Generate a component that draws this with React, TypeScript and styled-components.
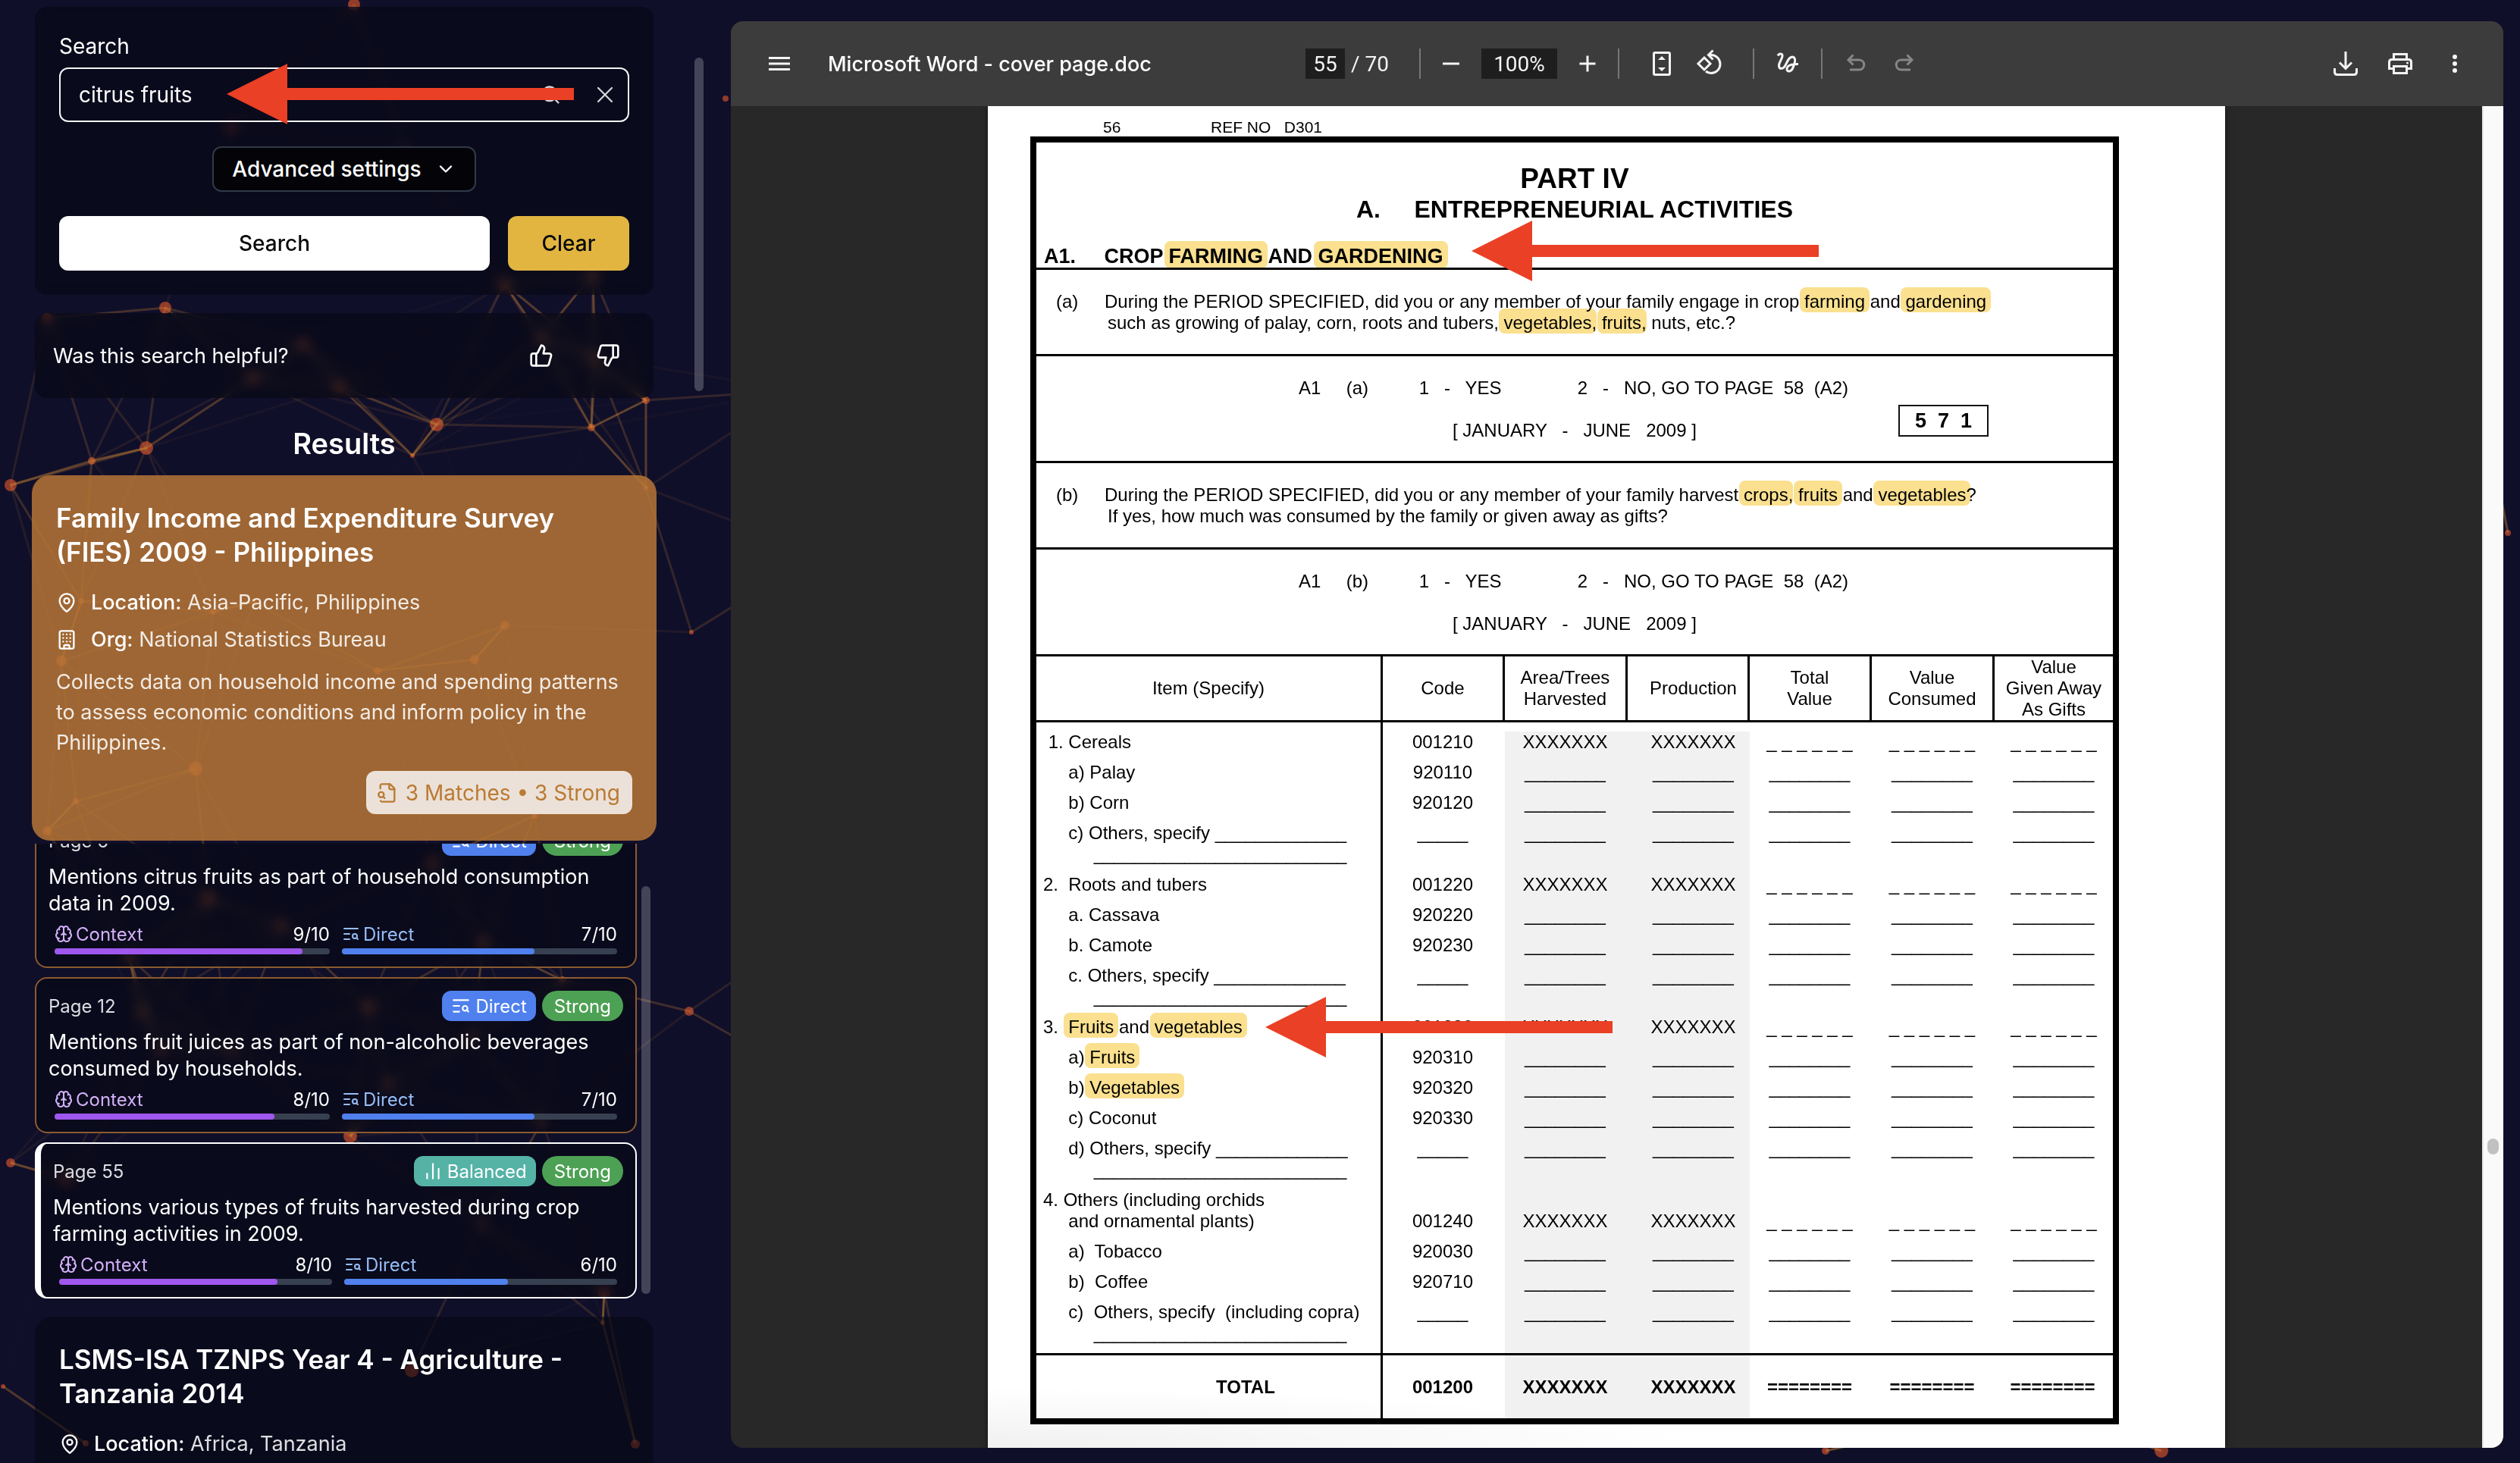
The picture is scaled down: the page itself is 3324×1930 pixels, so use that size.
import React from "react";
import styled, { createGlobalStyle, css } from "styled-components";
import {
  Brain,
  Building,
  ChartNoAxesColumn,
  ChevronDown,
  MapPin,
  Search as SearchIcon,
  TextSearch,
  ThumbsDown,
  ThumbsUp,
  X,
} from "lucide-react";

const ui = `Inter, "Open Sans", sans-serif`;
const doc = `"Liberation Sans", Arial, sans-serif`;

const GlobalStyle = createGlobalStyle`
  * { box-sizing: border-box; }
  html, body { margin: 0; background: #100f2a; }
  body { font-family: ${ui}; color: #fff; overflow: hidden; }
  button, input { font: inherit; color: inherit; margin: 0; border: 0; padding: 0; background: none; }
  button { cursor: pointer; }
  h1, h2, h3, p { margin: 0; font-weight: inherit; }
`;

/* ---------- particle network ---------- */

type Particle = [x: number, y: number, r: number];

const particles: Particle[] = [
  [467, 6, 8], [218, 406, 8], [305, 168, 7], [665, 374, 8], [782, 362, 8],
  [400, 454, 8], [333, 499, 8], [448, 510, 8], [576, 560, 9], [193, 591, 9],
  [121, 608, 5], [544, 601, 3], [780, 564, 5], [852, 528, 5], [957, 130, 4],
  [14, 640, 8], [62, 420, 7], [714, 445, 6], [785, 472, 6], [535, 195, 4],
  [852, 644, 3], [912, 834, 3], [666, 825, 6], [626, 870, 6], [498, 885, 5],
  [281, 807, 4], [335, 794, 4], [107, 793, 4], [81, 872, 7], [258, 1014, 9],
  [100, 1057, 4], [62, 1096, 6], [705, 1076, 4], [570, 1137, 7], [275, 1185, 9],
  [372, 1221, 7], [638, 1243, 7], [170, 1262, 6], [186, 1335, 6], [742, 1293, 5],
  [485, 1328, 8], [909, 1334, 6], [212, 1386, 6], [305, 1388, 5], [622, 1370, 5],
  [512, 1430, 6], [715, 1480, 5], [462, 1499, 9], [14, 1534, 6], [88, 1555, 8],
  [635, 1616, 5], [797, 1705, 8], [795, 1745, 3], [543, 1808, 9], [838, 1905, 6],
  [4, 1829, 3], [113, 1904, 4], [1050, 515, 5], [1080, 730, 5], [1090, 1210, 5],
  [1060, 1420, 5], [3308, 703, 4], [3290, 610, 4], [2408, 1914, 5], [2470, 1900, 5],
  [2851, 1914, 9], [2780, 1890, 5],
];

const LINK_DISTANCE = 290;

const links = particles.flatMap(([x1, y1], i) =>
  particles.slice(i + 1).flatMap(([x2, y2]) => {
    const d = Math.hypot(x1 - x2, y1 - y2);
    return d < LINK_DISTANCE ? [{ x1, y1, x2, y2, o: 0.6 * (1 - d / LINK_DISTANCE) }] : [];
  })
);

const NetworkCanvas = styled.svg`
  position: fixed;
  inset: 0;
  width: 100%;
  height: 100%;
`;

function Network() {
  return (
    <NetworkCanvas aria-hidden="true">
      {particles.map(([x, y, r], i) => (
        <circle key={i} cx={x} cy={y} r={r} fill="#d9532c" opacity={0.65} />
      ))}
      {links.map((l, i) => (
        <line key={i} x1={l.x1} y1={l.y1} x2={l.x2} y2={l.y2} stroke="#d28a35" strokeWidth={3} opacity={l.o} />
      ))}
    </NetworkCanvas>
  );
}

/* ---------- red pointer ---------- */

const ArrowSvg = styled.svg<{ $x: number; $y: number }>`
  position: absolute;
  left: ${(p) => p.$x}px;
  top: ${(p) => p.$y}px;
  width: 458px;
  height: 80px;
  pointer-events: none;
`;

function Arrow({ x, y }: { x: number; y: number }) {
  return (
    <ArrowSvg $x={x} $y={y} viewBox="0 0 458 80" aria-hidden="true">
      <path d="M0 40 80 0v32h378v16H80v32z" fill="#ea4025" />
    </ArrowSvg>
  );
}

/* ---------- shell ---------- */

const Shell = styled.div`
  position: relative;
  display: grid;
  grid-template-columns: 29% 1fr;
  height: 100vh;
  overflow: hidden;
`;

const Sidebar = styled.aside`
  display: flex;
  gap: 54px;
  min-width: 0;
  height: 100vh;
  padding: 9px 36px 0 46px;
`;

const SidebarContent = styled.div`
  flex: 1;
  min-width: 0;
`;

const ScrollThumb = styled.div<{ $h: number; $mt: number }>`
  flex: none;
  width: 12px;
  height: ${(p) => p.$h}px;
  margin-top: ${(p) => p.$mt}px;
  border-radius: 6px;
  background: rgba(255, 255, 255, 0.22);
`;

const glass = css`
  background: rgba(5, 6, 18, 0.6);
  backdrop-filter: blur(8px);
`;

/* ---------- search form ---------- */

const SearchCard = styled.form`
  ${glass}
  display: flex;
  flex-direction: column;
  gap: 32px;
  padding: 32px;
  border-radius: 16px;
`;

const Field = styled.div`
  position: relative;
  display: flex;
  flex-direction: column;
  gap: 8px;
`;

const FieldLabel = styled.label`
  font-size: 28px;
  line-height: 40px;
`;

const InputFrame = styled.div`
  display: flex;
  align-items: center;
  gap: 40px;
  height: 72px;
  padding: 0 12px 0 24px;
  border: 2px solid #f4f4f6;
  border-radius: 12px;

  input {
    flex: 1;
    min-width: 0;
    height: 100%;
    font-size: 28px;
    outline: none;
  }
  svg, button { display: block; color: #d4d4da; }
`;

const AdvancedButton = styled.button`
  display: flex;
  align-items: center;
  align-self: center;
  gap: 18px;
  height: 60px;
  padding: 0 24px;
  border: 2px solid #303a4a;
  border-radius: 12px;
  background: #040408;
  font-size: 28px;
  font-weight: 500;
`;

const Actions = styled.div`
  display: flex;
  gap: 24px;
`;

const ActionButton = styled.button<{ $kind: "primary" | "accent" }>`
  flex: ${(p) => (p.$kind === "primary" ? "1" : "0 0 160px")};
  height: 72px;
  border-radius: 12px;
  background: ${(p) => (p.$kind === "primary" ? "#fff" : "#e1b540")};
  color: #0a0a0a;
  font-size: 28px;
  font-weight: 500;
`;

/* ---------- feedback ---------- */

const Feedback = styled.section`
  ${glass}
  display: flex;
  align-items: center;
  gap: 56px;
  height: 112px;
  margin-top: 24px;
  padding: 0 44px 0 24px;
  border-radius: 16px;
  font-size: 27px;

  p { flex: 1; }
  button, svg { display: block; }
`;

const ResultsHeading = styled.h2`
  margin: 36px 0 18px;
  text-align: center;
  font-size: 38px;
  line-height: 48px;
  font-weight: 600;
`;

/* ---------- result cards ---------- */

const ResultCard = styled.article<{ $selected?: boolean }>`
  border-radius: 24px;
  padding: 34px 32px 35px;
  ${(p) =>
    p.$selected
      ? css`
          margin: 0 -4px;
          background: rgba(183, 118, 54, 0.85);
        `
      : css`
          margin-top: 24px;
          background: rgba(5, 6, 18, 0.6);
        `}
`;

const ResultTitle = styled.h3`
  margin-bottom: 24px;
  font-size: 35px;
  line-height: 45px;
  font-weight: 600;
`;

const Meta = styled.p`
  display: flex;
  align-items: center;
  gap: 18px;
  margin-bottom: 9px;
  font-size: 27px;
  line-height: 40px;
  color: rgba(255, 255, 255, 0.87);

  b { font-weight: 500; color: #fff; }
  svg { color: #fff; }
`;

const Summary = styled.p`
  margin-top: 16px;
  font-size: 27px;
  line-height: 40px;
  color: rgba(255, 255, 255, 0.87);
`;

const MatchCount = styled.button`
  display: flex;
  align-items: center;
  gap: 10px;
  height: 57px;
  margin: 17px 0 0 auto;
  padding: 0 16px 0 14px;
  border-radius: 12px;
  background: #ebe1d8;
  color: #bb7a33;
  font-size: 28px;
`;

const FileSearchGlyph = () => (
  <svg width="28" height="28" viewBox="0 0 24 24" fill="none" stroke="currentColor" strokeWidth="2" strokeLinecap="round" strokeLinejoin="round" aria-hidden="true">
    <path d="M14 2v4a2 2 0 0 0 2 2h4" />
    <path d="M4.268 21a2 2 0 0 0 1.727 1H18a2 2 0 0 0 2-2V7l-5-5H6a2 2 0 0 0-2 2v3" />
    <path d="m9 18-1.500-1.500" />
    <circle cx="5" cy="14" r="3" />
  </svg>
);

/* ---------- matches ---------- */

const MatchViewport = styled.div`
  display: flex;
  gap: 6px;
  height: 600px;
  margin-top: 4px;
  padding-right: 4px;
`;

const MatchStack = styled.div`
  flex: 1;
  display: flex;
  flex-direction: column;
  justify-content: flex-end;
  gap: 12px;
  overflow: hidden;
`;

const MatchCard = styled.article<{ $active?: boolean }>`
  ${glass}
  flex: none;
  padding: 16px;
  border: 2px solid ${(p) => (p.$active ? "#fff" : "#8b5b2f")};
  border-left-width: ${(p) => (p.$active ? 8 : 2)}px;
  border-radius: 16px;
  font-size: 24px;
`;

const MatchHead = styled.header`
  display: flex;
  align-items: center;
  gap: 8px;
  height: 40px;
  color: #dcdce2;

  span:first-child { flex: 1; }
`;

const Tag = styled.span<{ $tone: "direct" | "balanced" | "strong" }>`
  display: flex;
  align-items: center;
  gap: 6px;
  height: 40px;
  padding: 0 ${(p) => (p.$tone === "strong" ? 16 : 12)}px;
  border-radius: ${(p) => (p.$tone === "strong" ? 20 : 12)}px;
  background: ${(p) => ({ direct: "#4f80ee", balanced: "#55b3a6", strong: "#4da154" })[p.$tone]};
  color: #fff;
`;

const MatchText = styled.p`
  margin-top: 10px;
  font-size: 27px;
  line-height: 35px;
`;

const Scores = styled.div`
  display: grid;
  grid-template-columns: 1fr 1fr;
  gap: 16px;
  margin-top: 7px;
  padding: 0 8px;
`;

const ScoreHead = styled.div<{ $color: string }>`
  display: flex;
  align-items: center;
  gap: 4px;
  height: 32px;
  color: ${(p) => p.$color};

  span { flex: 1; }
  b { font-weight: 400; color: #fff; }
`;

const Track = styled.div<{ $color: string }>`
  height: 8px;
  margin-top: 3px;
  border-radius: 4px;
  background: #374050;

  div {
    height: 100%;
    border-radius: 4px;
    background: ${(p) => p.$color};
  }
`;

type Match = {
  page: number;
  kind: "direct" | "balanced";
  text: string;
  context: number;
  direct: number;
  active?: boolean;
};

const matches: Match[] = [
  { page: 6, kind: "direct", text: "Mentions citrus fruits as part of household consumption data in 2009.", context: 9, direct: 7 },
  { page: 12, kind: "direct", text: "Mentions fruit juices as part of non-alcoholic beverages consumed by households.", context: 8, direct: 7 },
  { page: 55, kind: "balanced", text: "Mentions various types of fruits harvested during crop farming activities in 2009.", context: 8, direct: 6, active: true },
];

function Score(props: { icon: React.ReactNode; label: string; value: number; color: string; bar: string }) {
  return (
    <div>
      <ScoreHead $color={props.color}>
        {props.icon}
        <span>{props.label}</span>
        <b>{props.value}/10</b>
      </ScoreHead>
      <Track $color={props.bar}>
        <div style={{ width: `${props.value * 10}%` }} />
      </Track>
    </div>
  );
}

function MatchItem({ m }: { m: Match }) {
  return (
    <MatchCard $active={m.active}>
      <MatchHead>
        <span>Page {m.page}</span>
        <Tag $tone={m.kind}>
          {m.kind === "direct" ? <TextSearch size={26} /> : <ChartNoAxesColumn size={26} />}
          {m.kind === "direct" ? "Direct" : "Balanced"}
        </Tag>
        <Tag $tone="strong">Strong</Tag>
      </MatchHead>
      <MatchText>{m.text}</MatchText>
      <Scores>
        <Score icon={<Brain size={24} />} label="Context" value={m.context} color="#d3b0f8" bar="#9f57ee" />
        <Score icon={<TextSearch size={24} />} label="Direct" value={m.direct} color="#95bdf6" bar="#4f80ee" />
      </Scores>
    </MatchCard>
  );
}

/* ---------- viewer ---------- */

const ViewerArea = styled.main`
  min-width: 0;
  padding: 28px 22px 20px 0;
`;

const Viewer = styled.section`
  position: relative;
  display: flex;
  flex-direction: column;
  height: 100%;
  border-radius: 16px;
  overflow: hidden;
  background: #282828;
`;

const Toolbar = styled.header`
  display: flex;
  flex: none;
  align-items: center;
  height: 112px;
  background: #3c3c3c;
  font-family: Roboto, ${ui};
  font-size: 28px;
  color: #f4f4f4;
`;

const ToolbarSide = styled.div<{ $end?: boolean }>`
  flex: 1 1 0;
  display: flex;
  align-items: center;
  justify-content: ${(p) => (p.$end ? "flex-end" : "flex-start")};
  padding: 0 28px 0 32px;
  white-space: nowrap;

  h1 {
    margin-left: 32px;
    font-family: ${ui};
    font-size: 27px;
    font-weight: 500;
    color: #fff;
  }
`;

const ToolbarCenter = styled.div`
  display: flex;
  align-items: center;
`;

const ToolInput = styled.input<{ $w: number }>`
  width: ${(p) => p.$w}px;
  height: 40px;
  background: #1e1e1e;
  text-align: center;
`;

const PageTotal = styled.span`
  width: 98px;
  padding-left: 8px;
`;

const Rule = styled.i`
  width: 2px;
  height: 40px;
  background: #777;
`;

const Tools = styled.div<{ $before: number; $after: number }>`
  display: flex;
  padding: 0 ${(p) => p.$after}px 0 ${(p) => p.$before}px;
`;

const Tool = styled.button<{ $w?: number }>`
  display: flex;
  align-items: center;
  justify-content: center;
  width: ${(p) => p.$w ?? 64}px;
  height: 64px;

  &:disabled { color: #868686; }
`;

const Glyph = ({ children, fill }: { children: React.ReactNode; fill?: boolean }) => (
  <svg width="40" height="40" viewBox="0 0 40 40" fill={fill ? "currentColor" : "none"} stroke={fill ? "none" : "currentColor"} strokeWidth="3" aria-hidden="true">
    {children}
  </svg>
);

const Stage = styled.div`
  flex: 1;
  min-height: 0;
  display: flex;
  overflow: hidden;
`;

const PageColumn = styled.div`
  flex: 1;
  display: flex;
  justify-content: center;
`;

const DocScrollbar = styled.div`
  flex: none;
  width: 28px;
  padding: 1362px 6px 0 5px;
  border-left: 2px solid #e8e8e8;
  background: #fafafa;

  div {
    height: 21px;
    border-radius: 8px;
    background: #c1c1c1;
  }
`;

const Sheet = styled.article`
  position: relative;
  flex: none;
  width: 1632px;
  padding: 16px 140px 0 56px;
  background: radial-gradient(ellipse 950px 80px at 0 100%, rgba(0, 0, 0, 0.06), transparent) #fff;
  box-shadow: 0 0 8px rgba(0, 0, 0, 0.5);
  color: #000;
  font-family: ${doc};
  font-size: 24px;
  line-height: 28px;
  white-space: pre;
`;

const RunningHead = styled.div`
  display: flex;
  padding-left: 96px;
  font-size: 21px;
  line-height: 24px;

  span { width: 142px; }
`;

const FormBox = styled.div`
  border: 8px solid #000;
`;

const FormRow = styled.section`
  border-bottom: 3px solid #000;
`;

const Heading = styled(FormRow)`
  padding: 28px 0 0 10px;
  font-weight: 700;
  text-align: center;

  h1 { font-size: 37px; line-height: 40px; padding-right: 10px; }
  h2 { font-size: 32px; line-height: 40px; padding-right: 10px; }
  h3 { margin-top: 28px; font-size: 27px; line-height: 29px; text-align: left; }
`;

const Question = styled(FormRow)`
  display: flex;
  height: 114px;
  padding: 28px 0 0 26px;

  > span { width: 64px; }
  p + p { padding-left: 4px; }
`;

const Answer = styled(FormRow)`
  display: flex;
  height: 141px;
  padding: 28px 0 0 346px;
`;

const AnswerLines = styled.div`
  display: grid;
  align-content: start;
  gap: 28px;
  width: 791px;

  p + p { padding-left: 203px; }
`;

const CodeBox = styled.div`
  height: 42px;
  margin-top: 36px;
  padding: 0 20px;
  border: 2px solid #111;
  font-size: 27px;
  line-height: 38px;
  font-weight: 700;
`;

const Hit = styled.mark<{ $flush?: boolean }>`
  margin: 0 ${(p) => (p.$flush ? 0 : -6)}px 0 -6px;
  padding: 5px ${(p) => (p.$flush ? 0 : 6)}px 1px 6px;
  border-radius: 8px;
  background: #fae08f;
  color: inherit;
  mix-blend-mode: multiply;
`;

const FormTable = styled.table`
  width: 100%;
  table-layout: fixed;
  border-spacing: 0;

  th, td { padding: 0; font-weight: inherit; text-align: center; vertical-align: top; }
  th:nth-child(4), td:nth-child(4) { padding-left: 15px; }

  thead th {
    height: 87px;
    vertical-align: middle;
    border-right: 3px solid #000;
    border-bottom: 3px solid #000;
  }
  thead th:last-child { border-right: 0; }

  tbody th { padding: 0 0 12px 9px; text-align: left; }
  tbody th, tfoot th { border-right: 3px solid #000; }
  td { border-right: 3px solid transparent; }
  td:last-child { border-right: 0; }
  tbody td { padding-bottom: 12px; }
  tr[data-shaded] td:nth-child(3), tr[data-shaded] td:nth-child(4) { background: #f1f1f1; }

  tfoot { font-weight: 700; }
  tfoot th, tfoot td { height: 86px; border-top: 3px solid #000; vertical-align: middle; background-clip: padding-box; }
  tfoot td { border-right-width: 0; padding-right: 3px; }
  tfoot th { padding-left: 98px; }
`;

const Spacer = styled.tr`
  height: 12px;

  th, td { padding: 0; }
`;

const Row = styled.tr<{ $low?: boolean }>`
  td { vertical-align: ${(p) => (p.$low ? "bottom" : "top")} !important; }
`;

const SOLID = "________";
const DASHED = "_ _ _ _ _ _";
const XS = "XXXXXXX";
const in5 = "     ";
const long = "\n" + " ".repeat(10) + "_".repeat(25);

type Item = { label: React.ReactNode; code: string; group?: boolean; low?: boolean };

const items: Item[] = [
  { label: " 1. Cereals", code: "001210", group: true },
  { label: in5 + "a) Palay", code: "920110" },
  { label: in5 + "b) Corn", code: "920120" },
  { label: in5 + "c) Others, specify _____________" + long, code: "_____" },
  { label: "2.  Roots and tubers", code: "001220", group: true },
  { label: in5 + "a. Cassava", code: "920220" },
  { label: in5 + "b. Camote", code: "920230" },
  { label: in5 + "c. Others, specify _____________" + long, code: "_____" },
  { label: <>3.  <Hit>Fruits</Hit> and <Hit>vegetables</Hit></>, code: "001230", group: true },
  { label: <>{in5}a) <Hit>Fruits</Hit></>, code: "920310" },
  { label: <>{in5}b) <Hit>Vegetables</Hit></>, code: "920320" },
  { label: in5 + "c) Coconut", code: "920330" },
  { label: in5 + "d) Others, specify _____________" + long, code: "_____" },
  { label: "4. Others (including orchids\n" + in5 + "and ornamental plants)", code: "001240", group: true, low: true },
  { label: in5 + "a)  Tobacco", code: "920030" },
  { label: in5 + "b)  Coffee", code: "920710" },
  { label: in5 + "c)  Others, specify  (including copra)" + long, code: "_____" },
];

const heads = ["Item (Specify)", "Code", "Area/Trees\nHarvested", "Production", "Total\nValue", "Value\nConsumed", "Value\nGiven Away\nAs Gifts"];
const widths = [457, 161, 162, 161, 161, 162];

const choices = (part: string) =>
  `A1     (${part})          1   -   YES               2   -   NO, GO TO PAGE  58  (A2)`;
const period = "[ JANUARY   -   JUNE   2009 ]";

function DocumentPage() {
  return (
    <Sheet>
      <RunningHead>
        <span>56</span>REF NO   D301
      </RunningHead>
      <FormBox>
        <Heading>
          <h1>PART IV</h1>
          <h2>A.     ENTREPRENEURIAL ACTIVITIES</h2>
          <h3>A1.     CROP <Hit>FARMING</Hit> AND <Hit>GARDENING</Hit></h3>
        </Heading>
        <Question>
          <span>(a)</span>
          <div>
            <p>During the PERIOD SPECIFIED, did you or any member of your family engage in crop <Hit>farming</Hit> and <Hit>gardening</Hit></p>
            <p>such as growing of palay, corn, roots and tubers, <Hit $flush>vegetables,</Hit> <Hit $flush>fruits,</Hit> nuts, etc.?</p>
          </div>
        </Question>
        <Answer>
          <AnswerLines>
            <p>{choices("a")}</p>
            <p>{period}</p>
          </AnswerLines>
          <CodeBox>5  7  1</CodeBox>
        </Answer>
        <Question>
          <span>(b)</span>
          <div>
            <p>During the PERIOD SPECIFIED, did you or any member of your family harvest <Hit $flush>crops,</Hit> <Hit>fruits</Hit> and <Hit>vegetables</Hit>?</p>
            <p>If yes, how much was consumed by the family or given away as gifts?</p>
          </div>
        </Question>
        <Answer>
          <AnswerLines>
            <p>{choices("b")}</p>
            <p>{period}</p>
          </AnswerLines>
        </Answer>
        <FormTable>
          <colgroup>
            {widths.map((w, i) => (
              <col key={i} width={w} />
            ))}
            <col />
          </colgroup>
          <thead>
            <tr>{heads.map((h) => <th key={h} scope="col">{h}</th>)}</tr>
          </thead>
          <tbody>
            <Spacer><th /><td colSpan={6} /></Spacer>
            {items.map((it, i) => (
              <Row key={i} $low={it.low} data-shaded>
                <th scope="row">{it.label}</th>
                <td>{it.code}</td>
                <td>{it.group ? XS : SOLID}</td>
                <td>{it.group ? XS : SOLID}</td>
                <td>{it.group ? DASHED : SOLID}</td>
                <td>{it.group ? DASHED : SOLID}</td>
                <td>{it.group ? DASHED : SOLID}</td>
              </Row>
            ))}
          </tbody>
          <tfoot>
            <tr data-shaded>
              <th scope="row">TOTAL</th>
              <td>001200</td>
              <td>{XS}</td>
              <td>{XS}</td>
              <td>========</td>
              <td>========</td>
              <td>========</td>
            </tr>
          </tfoot>
        </FormTable>
      </FormBox>
      <Arrow x={638} y={151} />
      <Arrow x={366} y={1175} />
    </Sheet>
  );
}

function ViewerToolbar() {
  return (
    <Toolbar>
      <ToolbarSide>
        <Tool aria-label="Menu">
          <Glyph><path d="M6 12.500h28M6 20h28M6 27.500h28" /></Glyph>
        </Tool>
        <h1>Microsoft Word - cover page.doc</h1>
      </ToolbarSide>
      <ToolbarCenter>
        <ToolInput $w={52} defaultValue="55" aria-label="Page number" />
        <PageTotal>/ 70</PageTotal>
        <Rule />
        <Tool $w={80} aria-label="Zoom out">
          <Glyph><path d="M9 20h22" /></Glyph>
        </Tool>
        <ToolInput $w={100} defaultValue="100%" aria-label="Zoom level" />
        <Tool $w={80} aria-label="Zoom in">
          <Glyph><path d="M9.500 20h21M20 9.500v21" /></Glyph>
        </Tool>
        <Rule />
        <Tools $before={24} $after={24}>
          <Tool aria-label="Fit to page">
            <Glyph>
              <rect x="9.500" y="5.500" width="21" height="29" rx="1.500" />
              <path d="m15 15 5-5 5 5zM15 25l5 5 5-5z" fill="currentColor" stroke="none" />
            </Glyph>
          </Tool>
          <Tool aria-label="Rotate counterclockwise">
            <Glyph>
              <path d="m12 12 8 8-8 8-8-8z" />
              <path d="M18 8.500h3a12 12 0 0 1 0 24c-3 0-5-.8-7-2.500" />
              <path d="m23.500 2.500-6 6 6 6" />
            </Glyph>
          </Tool>
        </Tools>
        <Rule />
        <Tool $w={88} aria-label="Draw">
          <Glyph>
            <path d="M7 9.500c2-3.500 6.500-3.500 6 .5-.5 5-5 8.500-4.500 13 .5 5 5.500 4 8 0 3-5 4-10 8-11.500 4-1.500 6 2 5 6-1.500 6-3 12-7.500 12.500-3.500.3-4-4-1.500-6.500s6-3 13.500-3" />
          </Glyph>
        </Tool>
        <Rule />
        <Tools $before={12} $after={0}>
          <Tool disabled aria-label="Undo">
            <Glyph><path d="M16.500 8.500 10 15l6.500 6.500M10 15h14c9 0 9 13 0 13H12" /></Glyph>
          </Tool>
          <Tool disabled aria-label="Redo">
            <Glyph><path d="m23.500 8.500 6.500 6.500-6.500 6.500M30 15H16c-9 0-9 13 0 13h12" /></Glyph>
          </Tool>
        </Tools>
      </ToolbarCenter>
      <ToolbarSide $end>
        <Tool $w={72} aria-label="Download">
          <Glyph><path d="M20 4v22M12 18.500l8 8 8-8M5.500 26v5q0 3.500 3.500 3.500h22q3.500 0 3.500-3.500v-5" /></Glyph>
        </Tool>
        <Tool $w={72} aria-label="Print">
          <Glyph>
            <path d="M11.500 26.500h-6V18q0-3.500 3.500-3.500h22q3.500 0 3.500 3.500v8.500h-6M11.500 14V7.500h17V14M11.500 23.500h17v9h-17z" />
            <circle cx="29.500" cy="19" r="1.500" fill="currentColor" stroke="none" />
          </Glyph>
        </Tool>
        <Tool $w={72} aria-label="More options">
          <Glyph fill>
            <circle cx="20" cy="11" r="3" />
            <circle cx="20" cy="20" r="3" />
            <circle cx="20" cy="29" r="3" />
          </Glyph>
        </Tool>
      </ToolbarSide>
    </Toolbar>
  );
}

export default function App() {
  return (
    <>
      <GlobalStyle />
      <Network />
      <Shell>
        <Sidebar>
          <SidebarContent>
            <SearchCard onSubmit={(e) => e.preventDefault()}>
              <Field>
                <FieldLabel htmlFor="query">Search</FieldLabel>
                <InputFrame>
                  <input id="query" type="text" defaultValue="citrus fruits" />
                  <SearchIcon size={28} />
                  <button type="button" aria-label="Clear text"><X size={36} strokeWidth={1.5} /></button>
                </InputFrame>
                <Arrow x={221} y={43} />
              </Field>
              <AdvancedButton type="button">
                Advanced settings
                <ChevronDown size={28} />
              </AdvancedButton>
              <Actions>
                <ActionButton $kind="primary" type="submit">Search</ActionButton>
                <ActionButton $kind="accent" type="reset">Clear</ActionButton>
              </Actions>
            </SearchCard>

            <Feedback>
              <p>Was this search helpful?</p>
              <button aria-label="Helpful"><ThumbsUp size={32} /></button>
              <button aria-label="Not helpful"><ThumbsDown size={32} /></button>
            </Feedback>

            <ResultsHeading>Results</ResultsHeading>

            <ResultCard $selected>
              <ResultTitle>Family Income and Expenditure Survey (FIES) 2009 - Philippines</ResultTitle>
              <Meta><MapPin size={28} /><span><b>Location:</b> Asia-Pacific, Philippines</span></Meta>
              <Meta><Building size={28} /><span><b>Org:</b> National Statistics Bureau</span></Meta>
              <Summary>
                Collects data on household income and spending patterns to assess economic conditions and
                inform policy in the Philippines.
              </Summary>
              <MatchCount><FileSearchGlyph />3 Matches • 3 Strong</MatchCount>
            </ResultCard>

            <MatchViewport>
              <MatchStack>
                {matches.map((m) => <MatchItem key={m.page} m={m} />)}
              </MatchStack>
              <ScrollThumb $h={538} $mt={56} />
            </MatchViewport>

            <ResultCard>
              <ResultTitle>LSMS-ISA TZNPS Year 4 - Agriculture - Tanzania 2014</ResultTitle>
              <Meta><MapPin size={28} /><span><b>Location:</b> Africa, Tanzania</span></Meta>
            </ResultCard>
          </SidebarContent>
          <ScrollThumb $h={440} $mt={67} />
        </Sidebar>

        <ViewerArea>
          <Viewer>
            <ViewerToolbar />
            <Stage>
              <PageColumn>
                <DocumentPage />
              </PageColumn>
              <DocScrollbar><div /></DocScrollbar>
            </Stage>
          </Viewer>
        </ViewerArea>
      </Shell>
    </>
  );
}
